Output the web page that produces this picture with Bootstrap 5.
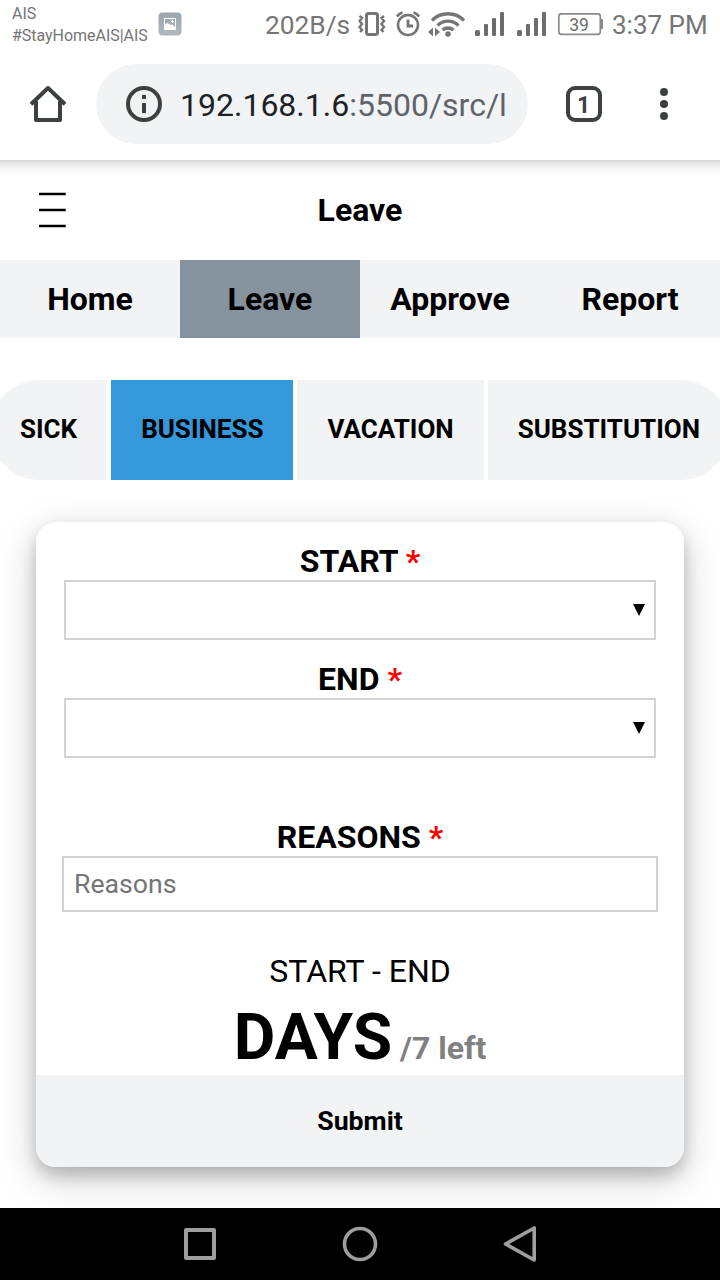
<!DOCTYPE html>
<html lang="en">
<head>
<meta charset="utf-8">
<meta name="viewport" content="width=device-width, initial-scale=1">
<title>Leave</title>
<link href="https://cdn.jsdelivr.net/npm/bootstrap@5.3.0/dist/css/bootstrap.min.css" rel="stylesheet">
<style>
  body { font-family: Roboto, "Liberation Sans", sans-serif; color: #000; font-size: 32px; line-height: 38px; height: 1280px; }
  svg { display: block; flex: none; }
  .status-bar { height: 50px; color: #757575; padding-left: 12px; }
  .carrier { font-size: 16px; line-height: 22px; width: 146px; padding-top: 3px; letter-spacing: -.03px; }
  .speed { width: 93px; margin-left: 83px; font-size: 26.3px; line-height: 51px; }
  .clock { font-size: 26px; line-height: 51px; margin-left: 8px; }
  .toolbar { height: 110px; padding-bottom: 2px; }
  .home-icon { margin-left: 28px; }
  .tab-icon { margin-left: 36px; }
  .more-icon { margin-left: 40px; }
  .url-pill { width: 432px; height: 80px; margin-left: 28px; padding-left: 28px; background: #f1f3f4; color: #202124; font-size: 32px; }
  .url-pill .url-text { margin-left: 16px; width: 330px; padding-top: 2px; }
  .url-rest { color: #5f6368; }
  .title-bar { height: 100px; background: linear-gradient(#d4d4d4, #dedede 2px, #ececec 5px, #f6f6f6 9px, #fdfdfd 14px, #fff 17px); }
  .tabs { height: 78px; background: #f1f3f4; }
  .tabs .nav-link { color: #000; font-weight: 700; padding: 0; line-height: 78px; border-radius: 0; }
  .tabs .nav-link.active { background: #86929e; color: #000; }
  .kinds { height: 100px; margin-top: 42px; gap: 4px; font-size: 26px; }
  .kinds .btn { --bs-btn-border-radius: 0; background: #f1f3f4; color: #000; font-size: inherit; font-weight: 700; padding: 0 30px 2px; border: 0; flex: none; }
  .kinds .btn:first-child { border-radius: 50px 0 0 50px; }
  .kinds .btn:last-child { border-radius: 0 50px 50px 0; }
  .kinds .btn.active { background: #3498db; }
  .leave-card { width: 648px; height: 645px; margin: 42px auto 0; border: 0; border-radius: 20px; box-shadow: 0 8px 16px rgba(0,0,0,.2), 0 12px 40px rgba(0,0,0,.19); --bs-card-color: #000; }
  .leave-card .card-body { padding: 20px 26px 0; flex: 1 1 0; min-height: 0; }
  .field-label { font-weight: 700; display: block; height: 38px; }
  .field-label span { color: #f00; }
  .date-box { height: 60px; margin: 0 2px; border: 2px solid #d3d3d3; padding-right: 8px; }
  .date-box + .field-label { margin-top: 20px; }
  .date-box + .field-label.reason-label { margin-top: 60px; }
  .reason-box { height: 56px; border: 2px solid #d3d3d3; border-radius: 0; padding: 0 10px; font-size: 26.67px; }
  .reason-box::placeholder { color: #757575; }
  .period { margin-top: 40px; }
  .days { font-size: 64px; line-height: 75px; font-weight: 700; margin-top: 10px; white-space: nowrap; }
  .days small { font-size: 32px; color: #808080; }
  .submit-btn { height: 92px; flex: none; background: #f1f3f4; border: 0; border-radius: 0 0 20px 20px; font-size: 26.67px; font-weight: 700; color: #000; }
  .system-nav { height: 72px; background: #000; z-index: 2; }
</style>
</head>
<body class="bg-white d-flex flex-column overflow-hidden">

<div class="status-bar d-flex bg-white">
  <div class="carrier">AIS<br>#StayHomeAIS|AIS</div>
  <svg width="24" height="50" viewBox="158 0 24 50">
    <defs><linearGradient id="tile" x1="0" y1="0" x2="0" y2="1"><stop offset="0" stop-color="#9aa5ad"/><stop offset="1" stop-color="#b0b8bd"/></linearGradient></defs>
    <rect x="158.500" y="12.500" width="23" height="23" rx="4" fill="url(#tile)"/>
    <rect x="164.500" y="18.500" width="11" height="11" fill="none" stroke="#fff" stroke-width="1"/>
    <path d="M164 25.500l2-1.500 1.500-1 3 2 1.500-.5 4 3.500V30h-12z" fill="#fff"/><path d="M172.500 20v3M171 21.500h3" stroke="#fff"/>
  </svg>
  <div class="speed">202B/s</div>
  <svg width="116" height="50" viewBox="358 0 116 50" fill="none" stroke="#757575">
    <rect x="366.500" y="13.500" width="11" height="21" rx="2" stroke-width="3"/>
    <path d="M359.500 16l2.500 2-2.500 3 2.500 3-2.500 3 2.500 3-2 2M384 16l-2.500 2 2.500 3-2.500 3 2.500 3-2.500 3 2 2" stroke-width="2.400"/>
    <circle cx="408" cy="25" r="10" stroke-width="2.600"/>
    <path d="M408 19.500V26h5" stroke-width="2.800"/>
    <path d="M397 16.500q2-3 5.500-4M419 16.500q-2-3-5.500-4" stroke-width="2.800"/>
    <path d="M432 20.500a22.500 22.500 0 0 1 32 0M437.500 25.500a14.800 14.800 0 0 1 21 0M442.500 30a8.500 8.500 0 0 1 11 0" stroke-width="3.400"/>
    <circle cx="448" cy="34" r="2.800" fill="#757575" stroke="none"/>
    <path d="M433 27.500v9l-5-4.500zM435 27.500v9l5-4.500z" fill="#757575" stroke="none"/>
  </svg>
  <svg width="130" height="50" viewBox="474 0 130 50">
    <g id="bars" fill="#6d6d6d"><rect x="475" y="30" width="5" height="6" rx="1.500"/><rect x="484" y="24" width="4" height="12" rx="1"/><rect x="492" y="18" width="4" height="18" rx="1"/><rect x="500" y="12" width="4" height="24" rx="1"/></g>
    <use href="#bars" x="42"/>
    <rect x="558.800" y="13.800" width="41.500" height="20.500" rx="2.500" fill="none" stroke="#8a8a8a" stroke-width="1.700"/>
    <rect x="601" y="19" width="2" height="10" fill="#8a8a8a"/>
    <text x="579" y="31" font-family="Roboto" font-size="17.500" fill="#6d6d6d" text-anchor="middle">39</text>
  </svg>
  <div class="clock text-nowrap">3:37 PM</div>
</div>

<header class="toolbar d-flex align-items-center bg-white">
  <svg class="home-icon" width="40" height="40" viewBox="28 84 40 40" fill="none" stroke="#3c4043" stroke-width="4" stroke-linejoin="round"><path d="M31 104.300L48 88l17 16.300M36 101v19h24v-19"/></svg>
  <div class="url-pill rounded-pill d-flex align-items-center">
    <svg width="40" height="40" viewBox="0 0 40 40"><circle cx="20" cy="20" r="16" fill="none" stroke="#3c4043" stroke-width="4"/><path d="M18 11h4v4h-4zM18 19h4v10h-4z" fill="#3c4043"/></svg>
    <div class="url-text text-nowrap">192.168.1.6<span class="url-rest">:5500/src/l</span></div>
  </div>
  <svg class="tab-icon" width="40" height="40" viewBox="0 0 40 40"><rect x="4" y="4" width="32" height="32" rx="7" fill="none" stroke="#3c4043" stroke-width="4"/><text x="19.500" y="28.500" font-family="Roboto" font-weight="700" font-size="23" fill="#3c4043" text-anchor="middle">1</text></svg>
  <svg class="more-icon" width="40" height="40" viewBox="0 0 40 40" fill="#3c4043"><circle cx="20" cy="8" r="4"/><circle cx="20" cy="20" r="4"/><circle cx="20" cy="32" r="4"/></svg>
</header>

<div class="title-bar d-flex align-items-center justify-content-center position-relative fw-bold">
  <svg class="position-absolute start-0 top-0" width="80" height="100" viewBox="0 0 80 100"><path d="M39 34h26.700M39 50h26.700M39 66h26.700" stroke="#000" stroke-width="2.600"/></svg>
  Leave
</div>

<nav class="tabs nav nav-justified flex-nowrap">
  <a class="nav-link w-25">Home</a><a class="nav-link w-25 active">Leave</a><a class="nav-link w-25">Approve</a><a class="nav-link w-25">Report</a>
</nav>

<div class="kinds d-flex justify-content-center">
  <button class="btn">SICK</button><button class="btn active">BUSINESS</button><button class="btn">VACATION</button><button class="btn">SUBSTITUTION</button>
</div>

<main class="leave-card card text-center">
  <div class="card-body">
    <label class="field-label">START <span>*</span></label>
    <div class="date-box d-flex align-items-center justify-content-end"><svg width="14" height="14" viewBox="0 0 14 14"><path d="M1 1h12L7 13z"/></svg></div>
    <label class="field-label">END <span>*</span></label>
    <div class="date-box d-flex align-items-center justify-content-end"><svg width="14" height="14" viewBox="0 0 14 14"><path d="M1 1h12L7 13z"/></svg></div>
    <label class="field-label reason-label">REASONS <span>*</span></label>
    <input class="reason-box form-control" placeholder="Reasons">
    <div class="period">START - END</div>
    <div class="days">DAYS<small> /7 left</small></div>
  </div>
  <button class="submit-btn w-100">Submit</button>
</main>

<footer class="system-nav mt-auto position-relative d-flex align-items-center justify-content-center">
  <svg width="360" height="72" viewBox="180 1208 360 72" fill="none" stroke="#9e9e9e" stroke-width="4" stroke-linejoin="round"><rect x="186" y="1230" width="28" height="28"/><circle cx="360" cy="1244" r="15.500" stroke-width="3.600"/><path d="M534.200 1228v32L505.500 1244z" stroke-width="3.600"/></svg>
</footer>
<script src="https://cdn.jsdelivr.net/npm/bootstrap@5.3.0/dist/js/bootstrap.bundle.min.js"></script>
</body>
</html>
